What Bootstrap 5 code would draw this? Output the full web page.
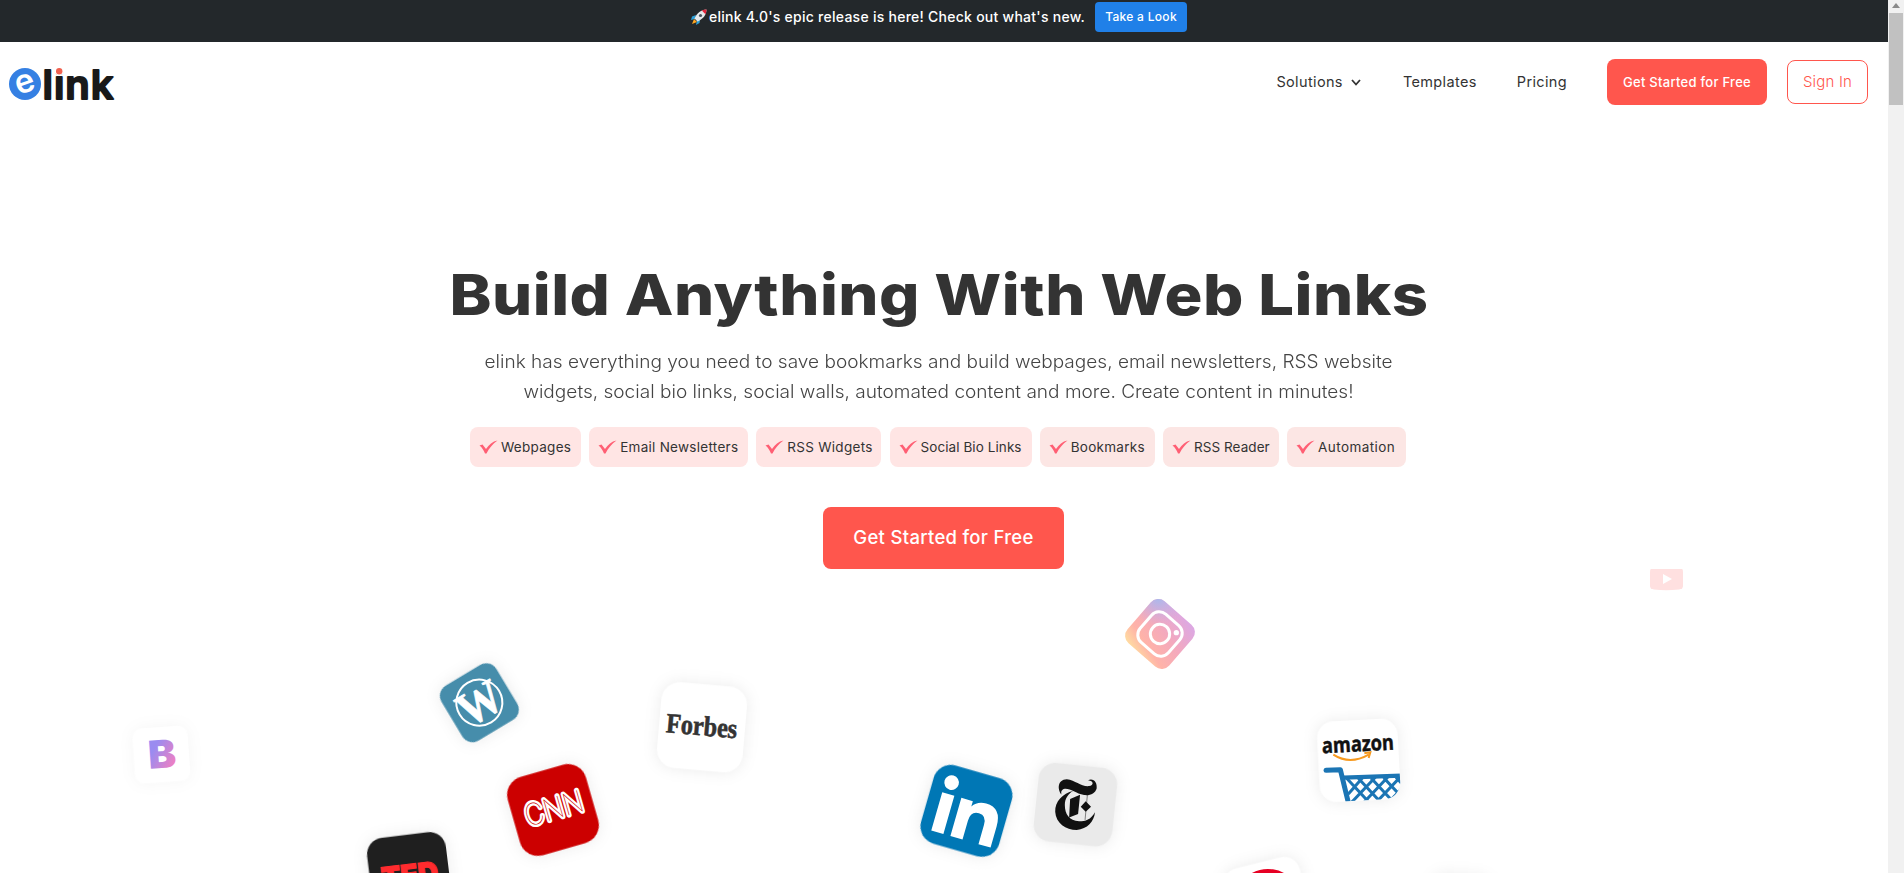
<!DOCTYPE html>
<html lang="en">
<head>
<meta charset="utf-8">
<meta name="viewport" content="width=device-width, initial-scale=1">
<title>elink</title>
<link href="https://cdn.jsdelivr.net/npm/bootstrap@5.3.0/dist/css/bootstrap.min.css" rel="stylesheet">
<style>
body{font-family:Inter,"Liberation Sans",sans-serif;color:#333;height:873px;overflow:hidden;background:#fff}
.page{width:1888px;height:873px}
.scroll-track{width:16px;height:873px;background:#f1f1f1}
.scroll-thumb{height:92px;width:14px;background:#c1c1c1}
.promo{height:42px;background:#23282b;padding-top:2px;padding-right:10px;gap:10px}
.promo-text{font-size:14px;font-weight:500;letter-spacing:.26px;color:#fff;gap:2px;height:29px}
.btn-look{width:92px;height:30px;background:#2080e8;color:#fff;font-size:12px;font-weight:500;letter-spacing:.3px;padding:0;border:0;border-radius:4px}
.site-nav{height:80px;padding:0 20px 0 9px}
.site-nav .nav-link{font-size:14.5px;letter-spacing:.36px;line-height:22px;color:#333;padding:0}
.nav-gap-a{margin-left:42px}
.nav-gap-b{margin-left:40px}
.btn-coral{background:#ff564d;color:#fff;border:0;font-weight:500;padding:0}
.btn-top{width:160px;height:46px;font-size:13px;letter-spacing:.27px;border-radius:8px;margin-left:40px;padding-top:1px}
.btn-sign{width:81px;height:44px;font-size:15px;font-weight:300;letter-spacing:.2px;color:#ff564d;border:1px solid #ff564d;border-radius:8px;margin-left:20px;padding:0}
.hero{width:1100px;margin-left:388px;padding-top:138px}
.hero h1{font-size:56.5px;font-weight:800;line-height:70px;letter-spacing:.45px;white-space:nowrap;transform:scaleX(1.12);margin:0 0 17px 2px}
.hero .intro{font-size:18px;font-weight:300;line-height:30px;color:#444;white-space:nowrap;transform:scaleX(1.059);margin:0 0 20px 1px}
.chips{gap:8.2px}
.chip{height:40px;background:#ffe5e4;border-radius:8px;font-size:13.5px;letter-spacing:.28px;padding-left:9px;gap:3px;white-space:nowrap}
.chip.soft{background:#fce6e4}
.tight{letter-spacing:.08px}
.w-a{width:111px}.w-b{width:159px}.w-c{width:125px}.w-d{width:142px}.w-e{width:115px}.w-f{width:116px}.w-g{width:119px;letter-spacing:.42px}
.btn-cta{width:241px;height:62px;font-size:18.5px;letter-spacing:.3px;border-radius:8px;margin:40px 0 0 435px}
.pin{position:absolute;overflow:visible}
.tile{filter:drop-shadow(0 0 22px rgba(0,0,0,.08))}
.tile-faint{filter:drop-shadow(0 0 22px rgba(0,0,0,.04))}
</style>
</head>
<body class="d-flex">
<div class="page position-relative overflow-hidden flex-shrink-0">
  <div class="promo d-flex justify-content-center align-items-start">
    <div class="promo-text d-flex align-items-center">
      <svg width="16" height="16" viewBox="0 0 16 16"><path d="M5 6 1 7.5 0 11l4-1zM9 11l-.5 3L5 16l1-5z" fill="#2b9fd8"/><path d="M3 10 1 15l5-2z" fill="#ffa51f"/><path d="M15.500.5C10 .5 6 4 3.500 9.500L6.500 12.500C12 10 15.500 6 15.500.5Z" fill="#e5e9ec"/><path d="M15.500.5c-1.700 0-3.300.3-4.700 1l3.700 3.700c.7-1.400 1-3 1-4.700z" fill="#e0243b"/><circle cx="9.500" cy="6.500" r="1.600" fill="#4a5560"/></svg>
      <span>elink 4.0's epic release is here! Check out what's new.</span>
    </div>
    <a class="btn btn-look d-flex align-items-center justify-content-center" href="#">Take a Look</a>
  </div>

  <nav class="site-nav navbar d-flex flex-nowrap align-items-center">
    <a class="me-auto d-flex" href="#">
      <svg width="112" height="44" viewBox="0 0 112 44" role="img"><circle cx="16" cy="24" r="16" fill="#3580e3"/><text x="16" y="32.500" text-anchor="middle" transform="rotate(-20 16 24)" font-family="Inter" font-size="33" font-weight="600" fill="#fff">e</text><text x="33.500" y="39" font-family="Inter" font-size="40" font-weight="600" fill="#191919" stroke="#191919" stroke-width="1.800" stroke-linejoin="round" textLength="71" lengthAdjust="spacing">link</text><circle cx="50.200" cy="10.500" r="5" fill="#fff"/><circle cx="50.200" cy="11.300" r="3.200" fill="#f0604f"/></svg>
    </a>
    <a class="nav-link d-flex align-items-center" href="#">Solutions
      <svg class="ms-2" width="10" height="7" viewBox="0 0 10 7"><path d="M1 1l4 4.500L9 1" fill="none" stroke="#333" stroke-width="1.800"/></svg></a>
    <a class="nav-link nav-gap-a" href="#">Templates</a>
    <a class="nav-link nav-gap-b" href="#">Pricing</a>
    <a class="btn btn-coral btn-top d-flex align-items-center justify-content-center" href="#">Get Started for Free</a>
    <a class="btn btn-sign d-flex align-items-center justify-content-center" href="#">Sign In</a>
  </nav>

  <main class="hero text-center">
    <h1>Build Anything With Web Links</h1>
    <p class="intro">elink has everything you need to save bookmarks and build webpages, email newsletters, RSS website<br>widgets, social bio links, social walls, automated content and more. Create content in minutes!</p>
    <svg class="d-none"><symbol id="tick" viewBox="0 0 19 14"><path d="M.5 5.500 3.500 4.500 7 9C10 4.500 13.500 1.500 18.500.5 13.500 4 10 8.500 7.500 13.500H6C4.500 10 3 7.500.5 5.500Z" fill="#ff5f74"/></symbol></svg>
    <div class="chips d-flex justify-content-center">
      <div class="chip w-a d-flex align-items-center"><svg width="19" height="14"><use href="#tick"/></svg>Webpages</div>
      <div class="chip w-b d-flex align-items-center"><svg width="19" height="14"><use href="#tick"/></svg>Email Newsletters</div>
      <div class="chip w-c d-flex align-items-center"><svg width="19" height="14"><use href="#tick"/></svg>RSS Widgets</div>
      <div class="chip tight w-d d-flex align-items-center"><svg width="19" height="14"><use href="#tick"/></svg>Social Bio Links</div>
      <div class="chip soft w-e d-flex align-items-center"><svg width="19" height="14"><use href="#tick"/></svg>Bookmarks</div>
      <div class="chip soft tight w-f d-flex align-items-center"><svg width="19" height="14"><use href="#tick"/></svg>RSS Reader</div>
      <div class="chip soft w-g d-flex align-items-center"><svg width="19" height="14"><use href="#tick"/></svg>Automation</div>
    </div>
    <a class="btn btn-coral btn-cta d-flex align-items-center justify-content-center" href="#">Get Started for Free</a>
  </main>

  <!-- floating brand tiles -->
  <svg class="pin" style="left:110px;top:700px" width="100" height="100" viewBox="0 0 300 300">
    <defs><linearGradient id="gb" x1="0" y1="0" x2="1" y2="1"><stop offset=".3" stop-color="#9a8cf0"/><stop offset=".85" stop-color="#f27fc0"/></linearGradient></defs>
    <g transform="rotate(-4 154 164)"><rect class="tile-faint" x="71" y="81" width="166" height="166" rx="30" fill="#fff"/><text x="114" y="204" font-family="Inter" font-weight="900" font-size="116" textLength="84" lengthAdjust="spacingAndGlyphs" fill="url(#gb)">B</text></g>
  </svg>

  <svg class="pin" style="left:350px;top:650px" width="420" height="223" viewBox="0 0 1260 669">
    <g transform="rotate(-31 388 158)"><rect class="tile" x="292" y="62" width="192" height="192" rx="36" fill="#468dab"/>
      <circle cx="388" cy="158" r="69" fill="none" stroke="#fff" stroke-width="6"/>
      <text x="388" y="208" text-anchor="middle" font-family="Liberation Serif" font-weight="700" font-size="146" textLength="132" lengthAdjust="spacingAndGlyphs" fill="#fff" stroke="#fff" stroke-width="2">W</text></g>
    <g transform="rotate(5 1056 232)"><rect class="tile" x="927" y="103" width="258" height="258" rx="56" fill="#fff"/>
      <text x="948" y="256" font-family="Liberation Serif" font-weight="700" font-size="84" textLength="214" lengthAdjust="spacingAndGlyphs" fill="#333" stroke="#333" stroke-width="2">Forbes</text></g>
    <g transform="rotate(-16 609 480)"><rect class="tile" x="487" y="358" width="244" height="244" rx="56" fill="#c00"/>
      <text x="523" y="508" font-family="Inter" font-weight="100" font-size="90" textLength="180" lengthAdjust="spacingAndGlyphs" fill="#c00" stroke="#fff" stroke-width="15" stroke-linejoin="round" paint-order="stroke">CNN</text></g>
    <g transform="rotate(-7 178 673)"><rect class="tile" x="59" y="554" width="238" height="238" rx="50" fill="#1f1f1f"/>
      <text x="93" y="708" font-family="Inter" font-weight="900" font-size="90" textLength="172" lengthAdjust="spacingAndGlyphs" fill="#ff2b2e" stroke="#ff2b2e" stroke-width="3">TED</text></g>
  </svg>

  <svg class="pin" style="left:900px;top:740px" width="520" height="133" viewBox="0 0 1568 401">
    <g transform="rotate(16 200 213)"><rect class="tile" x="78" y="91" width="245" height="245" rx="54" fill="#0077b5"/>
      <circle cx="134" cy="144" r="22" fill="#fff"/>
      <path d="M115 180h38v120h-38zM175 180h36v17q14-21 41-21 49 0 49 58v66h-38v-60q0-30-24-30-26 0-26 31v59h-38z" fill="#fff"/></g>
    <g transform="translate(0 1)"><rect class="tile" transform="rotate(6 529 194)" x="410" y="75" width="238" height="238" rx="50" fill="#eaeaea"/>
    <path d="M487 163C475 150 473 118 503 117C530 120 545 140 570 138C585 135 585 122 567 120C585 113 595 128 593 145C588 160 575 167 555 165C530 160 515 145 497 146C487 148 485 155 487 163ZM523 152C490 160 467 185 468 215C470 250 500 270 533 270C565 268 585 245 588 217C575 240 560 244 540 244C510 242 497 222 497 195C497 175 508 160 523 152ZM513 177L543 164L537 222L510 233ZM560 184L576 200L560 215L545 200Z" fill="#111"/>
    <path d="M565 165L558 240" stroke="#111" stroke-width="1.500"/></g>
    <g transform="rotate(-14 1108 485)"><rect class="tile" x="990" y="367" width="236" height="236" rx="50" fill="#fff"/><circle cx="1108" cy="491" r="102" fill="#e60023"/></g>
  </svg>

  <svg class="pin" style="left:1100px;top:580px" width="120" height="110" viewBox="0 0 360 330">
    <defs><linearGradient id="ig" gradientUnits="userSpaceOnUse" x1="95" y1="215" x2="255" y2="110"><stop offset="0" stop-color="#ffe0a0"/><stop offset=".25" stop-color="#ffb3a8"/><stop offset=".6" stop-color="#f4a9bd"/><stop offset="1" stop-color="#dda8e2"/></linearGradient>
    <radialGradient id="ib" gradientUnits="userSpaceOnUse" cx="175" cy="55" r="85"><stop offset="0" stop-color="#a9b9ec"/><stop offset="1" stop-color="#c9aee8" stop-opacity="0"/></radialGradient></defs>
    <clipPath id="ic"><rect transform="rotate(41 180 162)" x="97" y="79" width="166" height="166" rx="30"/></clipPath>
    <g clip-path="url(#ic)"><rect width="360" height="330" fill="url(#ig)"/><rect width="360" height="330" fill="url(#ib)"/></g>
    <g transform="rotate(41 180 162)" fill="none" stroke="#fff" stroke-width="9"><rect x="124" y="106" width="112" height="112" rx="30"/><circle cx="180" cy="162" r="29"/></g><circle cx="229" cy="158" r="8" fill="#fff"/>
  </svg>

  <svg class="pin" style="left:1290px;top:700px" width="140" height="120" viewBox="0 0 420 360">
    <defs><clipPath id="ac"><rect transform="rotate(-3 206 181)" x="85" y="60" width="242" height="242" rx="50"/></clipPath></defs>
    <rect class="tile" transform="rotate(-3 206 181)" x="85" y="60" width="242" height="242" rx="50" fill="#fff"/>
    <text transform="rotate(-3 97 160)" x="97" y="160" font-family="Open Sans" font-weight="700" font-size="64" textLength="216" lengthAdjust="spacingAndGlyphs" fill="#111" stroke="#111" stroke-width="1.500">amazon</text>
    <path d="M130 164Q180 196 236 164M223 160L241 157L236 174" fill="none" stroke="#f79a1f" stroke-width="6"/>
    <g clip-path="url(#ac)" fill="none" stroke="#1b75b4"><path d="M108 211L151 209L178 320" stroke-width="15" stroke-linecap="round" stroke-linejoin="round"/><path d="M162 233L335 227" stroke-width="13"/>
    <path d="M170 235l70 75M205 235l70 75M243 234l70 75M281 233l70 75M318 232l50 55M175 282l42-48M182 310l74-78M219 310l74-78M256 310l74-78M293 310l50-52" stroke-width="9"/></g>
  </svg>

  <svg class="pin" style="left:1400px;top:830px" width="110" height="43" viewBox="0 0 330 129"><rect class="tile" x="90" y="136" width="180" height="180" rx="40" fill="#fff" transform="rotate(4 180 226)"/></svg>

  <svg class="pin" style="left:1650px;top:569px" width="33" height="22" viewBox="0 0 33 22"><path d="M1 0H32Q33 0 33 4V17Q33 20 29 20.500Q16 22 4 20.500Q0 20 0 17V4Q0 0 1 0Z" fill="#ffe0e0"/><path d="M13 5L22 10L13 15Z" fill="#fff"/></svg>
</div>
<div class="scroll-track flex-shrink-0 d-flex flex-column align-items-center">
  <svg width="16" height="13" viewBox="0 0 16 13"><path d="M4 8L8 3L12 8Z" fill="#8a8a8a"/></svg>
  <div class="scroll-thumb"></div>
</div>
</body>
</html>
